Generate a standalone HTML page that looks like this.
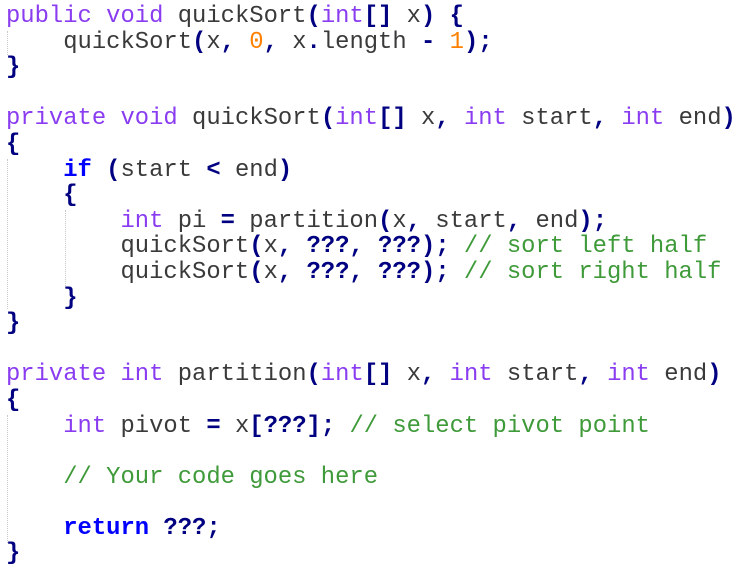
<!DOCTYPE html>
<html><head><meta charset="utf-8"><style>
html,body{margin:0;padding:0;background:#fff;width:740px;height:564px;overflow:hidden;position:relative}
pre{position:absolute;left:6px;top:4px;margin:0;font-family:"Courier New","Nimbus Mono PS","Liberation Mono",monospace;font-size:23.85px;line-height:25.6px;color:#3a3a3a}
.k{color:#8a3cf0}.b{color:#0000ff;font-weight:bold}.o{color:#000080;font-weight:bold}.n{color:#ff8000}.c{color:#3f9a3a}
.g{position:absolute;width:0;border-left:1px dotted #c8c8c8}
</style></head><body>
<div class="g" style="left:7px;top:31px;height:24px"></div>
<div class="g" style="left:7px;top:159px;height:150px"></div>
<div class="g" style="left:65px;top:210px;height:78px"></div>
<div class="g" style="left:7px;top:415px;height:128px"></div>
<pre><span class="k">public</span> <span class="k">void</span> quickSort<span class="o">(</span><span class="k">int</span><span class="o">[]</span> x<span class="o">)</span> <span class="o">{</span>
    quickSort<span class="o">(</span>x<span class="o">,</span> <span class="n">0</span><span class="o">,</span> x<span class="o">.</span>length <span class="o">-</span> <span class="n">1</span><span class="o">);</span>
<span class="o">}</span>

<span class="k">private</span> <span class="k">void</span> quickSort<span class="o">(</span><span class="k">int</span><span class="o">[]</span> x<span class="o">,</span> <span class="k">int</span> start<span class="o">,</span> <span class="k">int</span> end<span class="o">)</span>
<span class="o">{</span>
    <span class="b">if</span> <span class="o">(</span>start <span class="o">&lt;</span> end<span class="o">)</span>
    <span class="o">{</span>
        <span class="k">int</span> pi <span class="o">=</span> partition<span class="o">(</span>x<span class="o">,</span> start<span class="o">,</span> end<span class="o">);</span>
        quickSort<span class="o">(</span>x<span class="o">,</span> <span class="o">???,</span> <span class="o">???);</span> <span class="c">// sort left half</span>
        quickSort<span class="o">(</span>x<span class="o">,</span> <span class="o">???,</span> <span class="o">???);</span> <span class="c">// sort right half</span>
    <span class="o">}</span>
<span class="o">}</span>

<span class="k">private</span> <span class="k">int</span> partition<span class="o">(</span><span class="k">int</span><span class="o">[]</span> x<span class="o">,</span> <span class="k">int</span> start<span class="o">,</span> <span class="k">int</span> end<span class="o">)</span>
<span class="o">{</span>
    <span class="k">int</span> pivot <span class="o">=</span> x<span class="o">[???];</span> <span class="c">// select pivot point</span>

    <span class="c">// Your code goes here</span>

    <span class="b">return</span> <span class="o">???;</span>
<span class="o">}</span></pre>
</body></html>
